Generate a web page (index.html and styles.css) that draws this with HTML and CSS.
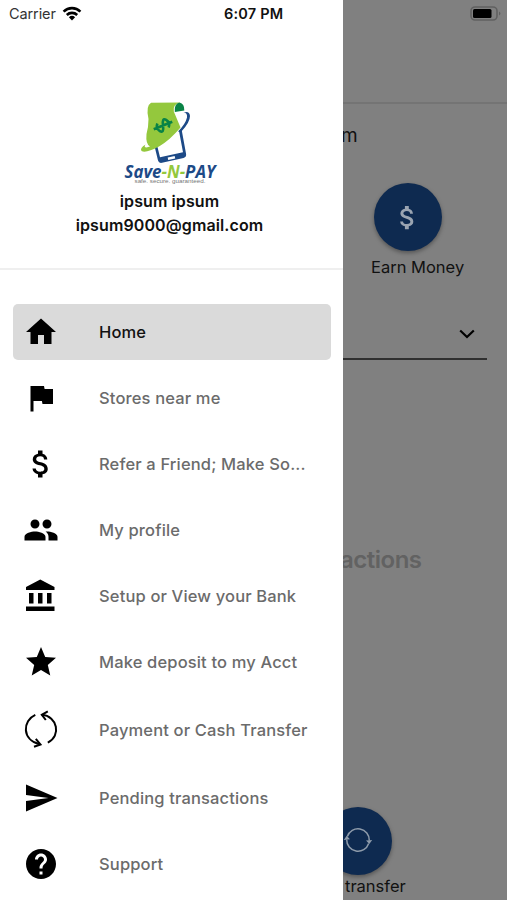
FILE: index.html
```html
<!DOCTYPE html>
<html lang="en">
<head>
<meta charset="utf-8">
<title>Save-N-PAY</title>
<link rel="stylesheet" href="styles.css">
</head>
<body>
<div class="app">
  <aside class="drawer">
    <div class="status">
      <span class="carrier">Carrier</span>
      <svg class="wifi" width="20" height="15" viewBox="0 0 20 15"><g fill="none" stroke="#000" stroke-width="2.600"><path d="M1.600 5.600a12 12 0 0 1 16.800 0"/><path d="M4.800 9a7.500 7.500 0 0 1 10.400 0"/></g><path d="M10 14.500L6.900 11.300a4.500 4.500 0 0 1 6.200 0z"/></svg>
      <span class="clock">6:07 PM</span>
    </div>
    <header class="account">
      <svg class="logo" width="100" height="88" viewBox="120 98 100 88">
        <path d="M154.500 146L158 160.500Q158.800 163.500 162 162.800L183.500 158Q186.800 157 186 153.500L181.500 129L179 131L183 152.200L160 157.200L157 145Z" fill="#1d4a87"/>
        <path d="M167.700 157.500l7-1.500 .5 2.600-7 1.500z" fill="#fff"/>
        <path d="M183.500 112.500Q187.500 112.500 187 117.500Q185.500 124 178 131.500L181 132Q190 122.500 190 116Q189.500 110.500 183.500 112.500Z" fill="#1d4a87"/>
        <path d="M151 102.700L180 102.500Q172.500 104.500 173.800 111.500L180.500 127.500Q170 140 159 146.500Q146 153.500 141.500 151Q139.500 148 145.500 144.500Q143.500 147.500 146.500 147.500L150 146.500Q145.500 144 146.500 134Q148.500 127 148.500 119Q145.500 106 151 102.700Z" fill="#94c83d"/>
        <path d="M174.800 112Q174 103.500 179.500 102.500Q184.500 103.500 184.300 110.500Z" fill="#098346"/>
        <g fill="none" stroke="#098346" stroke-width="2.600" transform="translate(163 125.500) rotate(68)"><path d="M4-4.500Q0-8-4-5T0 0t4 5T-4 4.500M0-10V10"/></g>
        <text x="124.500" y="177.500" textLength="91" lengthAdjust="spacingAndGlyphs" class="brand"><tspan fill="#1d4a87">Save</tspan><tspan fill="#94c83d">-N-</tspan><tspan fill="#1d4a87">PAY</tspan></text>
        <text x="134.500" y="183" textLength="71" lengthAdjust="spacingAndGlyphs" class="motto">safe. secure. guaranteed.</text>
      </svg>
      <div class="name">ipsum ipsum</div>
      <div class="mail">ipsum9000@gmail.com</div>
    </header>
    <nav class="menu">
      <a class="item active"><svg viewBox="0 0 24 24"><path d="M10 20v-6h4v6h5v-8h3L12 3 2 12h3v8z"/></svg><span>Home</span></a>
      <a class="item"><svg viewBox="0 0 24 24"><path d="M14.400 6L14 4H5v17h2v-7h5.600l.4 2h7V6z"/></svg><span>Stores near me</span></a>
      <a class="item"><svg class="dollar" viewBox="0 0 24 24"><path d="M11.800 10.900c-2.270-.59-3-1.200-3-2.150 0-1.090 1.010-1.850 2.700-1.850 1.780 0 2.440.85 2.500 2.100h2.210c-.07-1.720-1.120-3.300-3.210-3.810V3h-3v2.160c-1.940.42-3.500 1.680-3.500 3.610 0 2.310 1.910 3.460 4.700 4.130 2.500.6 3 1.480 3 2.410 0 .69-.49 1.790-2.700 1.790-2.060 0-2.870-.92-2.980-2.100h-2.200c.12 2.190 1.760 3.420 3.680 3.830V21h3v-2.150c1.950-.37 3.500-1.500 3.500-3.550 0-2.840-2.430-3.810-4.700-4.400z"/></svg><span>Refer a Friend; Make So...</span></a>
      <a class="item"><svg viewBox="0 0 24 24"><path d="M16 11c1.660 0 2.990-1.340 2.990-3S17.660 5 16 5s-3 1.340-3 3 1.340 3 3 3zm-8 0c1.660 0 2.990-1.340 2.990-3S9.660 5 8 5 5 6.340 5 8s1.340 3 3 3zm0 2c-2.330 0-7 1.170-7 3.500V19h14v-2.500c0-2.330-4.670-3.500-7-3.500zm8 0c-.29 0-.62.020-.97.050 1.160.84 1.970 1.970 1.970 3.450V19h6v-2.500c0-2.330-4.670-3.500-7-3.500z"/></svg><span>My profile</span></a>
      <a class="item"><svg viewBox="0 0 24 24"><path d="M4 10v7h3v-7H4zm6 0v7h3v-7h-3zM2 22h19v-3H2v3zm14-12v7h3v-7h-3zm-4.500-9L2 6v2h19V6l-9.500-5z"/></svg><span>Setup or View your Bank</span></a>
      <a class="item"><svg viewBox="0 0 24 24"><path d="M12 17.270L18.180 21l-1.640-7.030L22 9.240l-7.190-.61L12 2 9.190 8.630 2 9.240l5.460 4.730L5.820 21z"/></svg><span>Make deposit to my Acct</span></a>
      <a class="item tall"><svg viewBox="0 0 36 36"><g fill="none" stroke="#000" stroke-width="2"><path d="M12.300 2.800C-.5 8.500-1.500 28 16.800 32.300"/><path d="M18.800 2.800C34.500 4 38.500 24 24.800 30.700"/><path d="M12.800 26.800L17.500 32.500 11 34.800M24.800-.7L18.800 2.800 22.800 8"/></g></svg><span>Payment or Cash Transfer</span></a>
      <a class="item"><svg viewBox="0 0 24 24"><path d="M2.010 21L23 12 2.010 3 2 10l15 2-15 2z"/></svg><span>Pending transactions</span></a>
      <a class="item"><svg viewBox="0 0 24 24"><path d="M12 2C6.480 2 2 6.480 2 12s4.480 10 10 10 10-4.480 10-10S17.520 2 12 2zm1 17h-2v-2h2v2zm2.070-7.750l-.9.920C13.450 12.900 13 13.500 13 15h-2v-.5c0-1.100.45-2.100 1.170-2.830l1.240-1.260c.37-.36.590-.86.590-1.410 0-1.100-.9-2-2-2s-2 .9-2 2H8c0-2.210 1.790-4 4-4s4 1.790 4 4c0 .88-.36 1.680-.93 2.250z"/></svg><span>Support</span></a>
    </nav>
  </aside>
  <main class="screen">
    <div class="topbar">
      <svg width="32" height="16" viewBox="0 0 32 16"><rect x="1" y="1" width="26" height="13" rx="4" fill="#808080" stroke="#606060" stroke-width="1.600"/><rect x="3" y="3" width="18.500" height="9" rx="1.500"/><path d="M29 5.500q3 2 0 4z" fill="#606060"/></svg>
    </div>
    <div class="greeting">m</div>
    <div class="earn">
      <div class="disc"><svg width="31" height="31" viewBox="0 0 24 24"><path fill="#9aa4b1" d="M11.800 10.900c-2.270-.59-3-1.200-3-2.150 0-1.090 1.010-1.850 2.700-1.850 1.780 0 2.440.85 2.500 2.100h2.210c-.07-1.720-1.120-3.300-3.210-3.810V3h-3v2.160c-1.940.42-3.500 1.680-3.500 3.610 0 2.310 1.910 3.460 4.700 4.130 2.500.6 3 1.480 3 2.410 0 .69-.49 1.790-2.700 1.790-2.060 0-2.870-.92-2.980-2.100h-2.200c.12 2.190 1.760 3.420 3.680 3.830V21h3v-2.150c1.950-.37 3.500-1.500 3.500-3.550 0-2.840-2.430-3.810-4.700-4.400z"/></svg></div>
      <span class="caption">Earn Money</span>
    </div>
    <div class="picker"><svg width="16" height="10" viewBox="0 0 16 10"><path d="M1.200 1.500L8 8l6.800-6.500" fill="none" stroke="#000" stroke-width="2.200"/></svg></div>
    <div class="empty">actions</div>
    <div class="transfer">
      <div class="disc"><svg width="28" height="28" viewBox="0 0 28 28"><g fill="none" stroke="#8e9baa" stroke-width="1.500"><path d="M3.300 10.500A11.300 11.300 0 0 1 25.300 14.500"/><path d="M24.700 17.500A11.300 11.300 0 0 1 2.700 13.500"/></g><path d="M-.2 14L2.700 9.800 6 13.200zM22 14.500l6.200-.5-2.900 4z" fill="#8e9baa"/></svg></div>
      <span class="caption">transfer</span>
    </div>
  </main>
</div>
</body>
</html>
```
FILE: styles.css
```css
* { box-sizing: border-box; }
body { margin: 0; font-family: Inter, "Liberation Sans", sans-serif; color: #111; }
.app { display: grid; grid-template-columns: 343px 164px; height: 900px; overflow: hidden; }
.drawer { background: #fff; overflow: hidden; }
.status { display: flex; align-items: center; height: 28px; padding: 0 0 1px 9px; }
.carrier { width: 53px; font-size: 14.5px; letter-spacing: -0.1px; color: #333; }
.wifi { margin-top: -1px; }
.clock { margin-left: 142px; font-size: 14.5px; font-weight: 600; white-space: nowrap; letter-spacing: 0.2px; }
.account { display: flex; flex-direction: column; align-items: center; height: 242px; padding: 70px 4px 0 0; border-bottom: 2px solid #efefef; }
.logo { flex: none; display: block; }
.brand { font: italic 700 18px "Open Sans", sans-serif; }
.motto { font: 6px "Liberation Sans", sans-serif; fill: #777; }
.name, .mail { font-size: 16px; font-weight: 600; line-height: 24px; letter-spacing: 0.1px; }
.name { margin-top: 3px; }
.menu { display: flex; flex-direction: column; gap: 10px; padding: 34px 12px 0 13px; }
.item { display: flex; align-items: center; height: 56px; padding-left: 10px; border-radius: 5px; font-size: 16.5px; font-weight: 500; letter-spacing: 0.15px; color: #6b6b6b; white-space: nowrap; }
.item svg { flex: none; width: 36px; height: 36px; margin-right: 40px; overflow: visible; }
.item.active { background: #dadada; color: #111; }
.item.tall { height: 60px; }
.screen { display: flex; flex-direction: column; background: #808080; overflow: hidden; }
.topbar { display: flex; justify-content: flex-end; align-items: flex-start; flex: none; height: 104px; padding: 6px 5px 0 0; border-bottom: 2px solid #747474; }
.greeting { flex: none; height: 78px; padding-top: 19px; margin-left: -2px; font-size: 19px; line-height: 26px; }
.earn { display: flex; flex-direction: column; align-items: flex-start; height: 126px; flex: none; padding: 1px 0 0 28px; }
.disc { display: flex; align-items: center; justify-content: center; flex: none; width: 68px; height: 68px; margin-left: 3px; border-radius: 50%; background: #0e2a50; box-shadow: 0 2px 4px rgba(0,0,0,.35); }
.disc svg { overflow: visible; }
.earn .disc svg { margin-left: -2px; }
.caption { font-size: 16.5px; line-height: 20px; white-space: nowrap; }
.earn .caption { margin-top: 6px; }
.picker { display: flex; justify-content: flex-end; flex: none; width: 144px; height: 52px; padding: 21px 12px 0 0; border-bottom: 2px solid #303030; }
.empty { flex: none; margin-top: 184px; margin-left: -3px; height: 32px; font-size: 24px; font-weight: 600; line-height: 32px; letter-spacing: -0.5px; color: #626262; }
.transfer { display: flex; flex-direction: column; flex: none; margin-top: 231px; }
.transfer .disc { margin-left: -19px; }
.transfer .disc svg { margin: -3px 0 0 -1px; }
.transfer .caption { margin: 1px 0 0 2px; }
```
